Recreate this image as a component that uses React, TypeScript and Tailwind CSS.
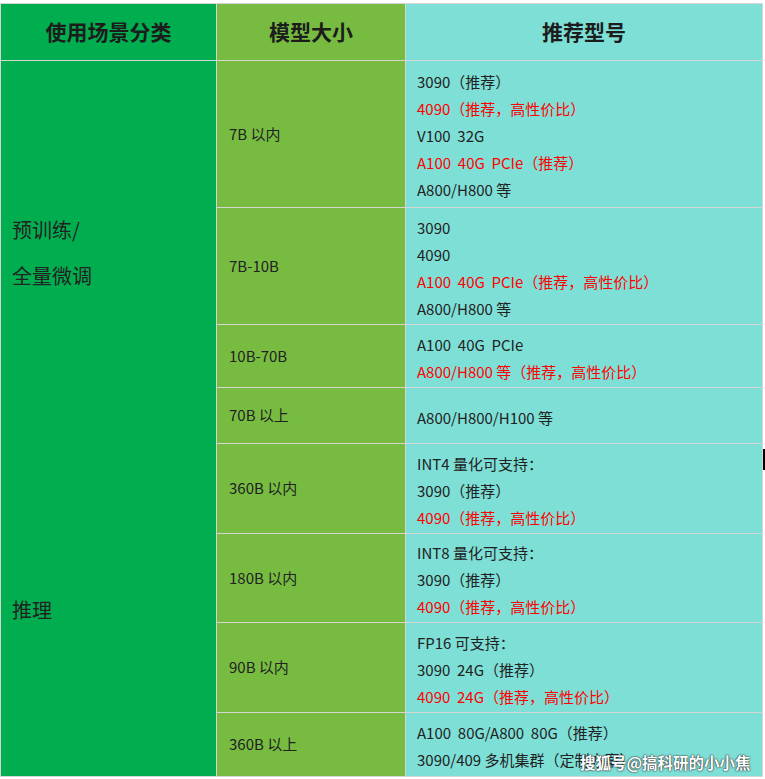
import React from "react";

type Line = { text: string; red?: boolean };

const font = { fontFamily: '"Noto Sans CJK SC", "Noto Sans", sans-serif' };

const rows: { size: string; lines: Line[] }[] = [
  {
    size: "7B 以内",
    lines: [
      { text: "3090（推荐）" },
      { text: "4090（推荐，高性价比）", red: true },
      { text: "V100  32G" },
      { text: "A100  40G  PCIe（推荐）", red: true },
      { text: "A800/H800 等" },
    ],
  },
  {
    size: "7B-10B",
    lines: [
      { text: "3090" },
      { text: "4090" },
      { text: "A100  40G  PCIe（推荐，高性价比）", red: true },
      { text: "A800/H800 等" },
    ],
  },
  {
    size: "10B-70B",
    lines: [
      { text: "A100  40G  PCIe" },
      { text: "A800/H800 等（推荐，高性价比）", red: true },
    ],
  },
  {
    size: "70B 以上",
    lines: [{ text: "A800/H800/H100 等" }],
  },
  {
    size: "360B 以内",
    lines: [
      { text: "INT4 量化可支持：" },
      { text: "3090（推荐）" },
      { text: "4090（推荐，高性价比）", red: true },
    ],
  },
  {
    size: "180B 以内",
    lines: [
      { text: "INT8 量化可支持：" },
      { text: "3090（推荐）" },
      { text: "4090（推荐，高性价比）", red: true },
    ],
  },
  {
    size: "90B 以内",
    lines: [
      { text: "FP16 可支持：" },
      { text: "3090  24G（推荐）" },
      { text: "4090  24G（推荐，高性价比）", red: true },
    ],
  },
  {
    size: "360B 以上",
    lines: [
      { text: "A100  80G/A800  80G（推荐）" },
      { text: "3090/409 多机集群（定制方案）" },
    ],
  },
];

export default function App() {
  return (
    <div className="relative w-[765px] h-[779px] overflow-hidden bg-white pt-[3px] text-[#222]" style={font}>
      <div className="grid w-[763px] grid-cols-[215px_188px_356px] grid-rows-[56px_146px_116px_62px_55px_89px_88px_89px_63px] gap-px border border-[#d5d5d5] bg-[#d5d5d5]">
        {/* Header */}
        <div className="flex items-center justify-center bg-[#00ae4f] text-[21px] font-bold text-[#1c1c1c]">使用场景分类</div>
        <div className="flex items-center justify-center bg-[#77bc41] text-[21px] font-bold text-[#1c1c1c]">模型大小</div>
        <div className="flex items-center justify-center bg-[#7edfd6] text-[21px] font-bold text-[#1c1c1c]">推荐型号</div>

        {/* Category column: one merged green block */}
        <div className="col-start-1 row-start-2 row-span-8 flex flex-col bg-[#00ae4f] pl-[11px] text-[20px]">
          <div className="flex h-[383px] flex-col justify-center leading-[46px]">
            <span>预训练/</span>
            <span>全量微调</span>
          </div>
          <div className="flex flex-1 items-center">推理</div>
        </div>

        {rows.map((r, i) => (
          <React.Fragment key={r.size}>
            <div
              className="col-start-2 flex items-center bg-[#77bc41] pl-[12px] text-[15px]"
              style={{ gridRowStart: i + 2 }}
            >
              {r.size}
            </div>
            <div
              className="col-start-3 flex flex-col justify-center bg-[#7edfd6] pl-[11px] pt-[3px] text-[15px] leading-[27px]"
              style={{ gridRowStart: i + 2 }}
            >
              {r.lines.map((l) => (
                <span key={l.text} className={`whitespace-pre ${l.red ? "text-[#ff0000]" : ""}`}>
                  {l.text}
                </span>
              ))}
            </div>
          </React.Fragment>
        ))}
      </div>

      {/* watermark */}
      <div className="absolute left-[580px] top-[751px] text-[15.5px] font-bold text-white [text-shadow:0_0_2px_#222,0_0_1px_#222]">
        搜狐号@搞科研的小小焦
      </div>
      {/* caret mark at the edge */}
      <div className="absolute left-[763px] top-[449px] h-[21px] w-[2px] bg-black" />
    </div>
  );
}
